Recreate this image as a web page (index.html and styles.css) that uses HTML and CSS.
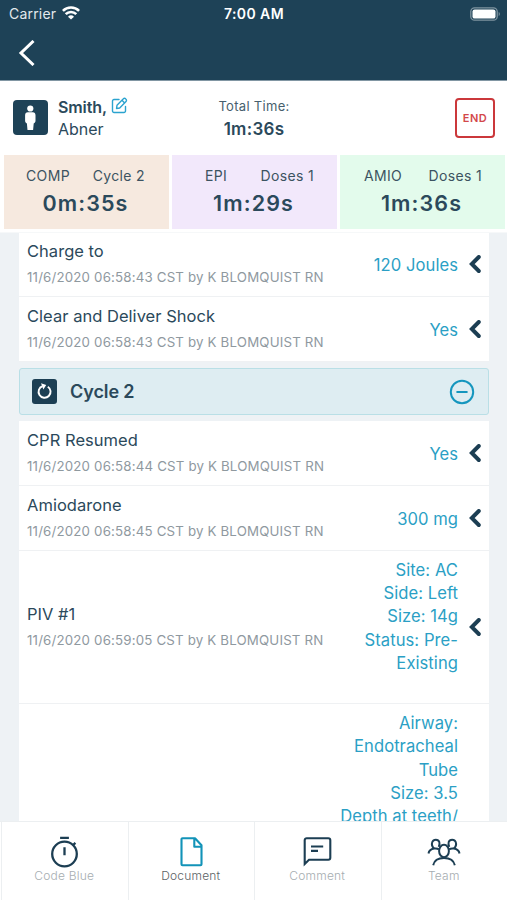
FILE: index.html
```html
<!DOCTYPE html>
<html lang="en">
<head>
<meta charset="utf-8">
<title>Code Blue - Document</title>
<link rel="stylesheet" href="styles.css">
</head>
<body>
<svg class="defs" width="0" height="0" aria-hidden="true">
  <symbol id="chev" viewBox="0 0 12 18"><path d="M9.800 2 2.800 9l7 7" fill="none" stroke="#1c3e53" stroke-width="3.900" stroke-linecap="round" stroke-linejoin="miter"/></symbol>
</svg>
<div class="app">
  <header class="top">
    <div class="status">
      <div class="carrier"><span>Carrier</span>
        <svg width="18" height="14" viewBox="0 0 18 14" fill="none" stroke="#fff" stroke-width="2.600"><path d="M.9 4.900a11.500 11.500 0 0 1 16.200 0M3.700 8.200a7.500 7.500 0 0 1 10.600 0"/><path d="M9 13.600 6 10.800a4.300 4.300 0 0 1 6 0z" fill="#fff" stroke="none"/></svg>
      </div>
      <div class="clock">7:00 AM</div>
      <svg class="battery" width="31" height="14" viewBox="0 0 31 14"><rect x=".8" y=".8" width="26.400" height="12.400" rx="3.800" fill="none" stroke="#7f94a0" stroke-width="1.300"/><rect x="2.500" y="2.400" width="23" height="9.200" rx="2.200" fill="#fff"/><path d="M28.700 5v4c1.500-.6 1.500-3.400 0-4z" fill="#7f94a0"/></svg>
    </div>
    <svg class="back" width="18" height="26" viewBox="0 0 18 26"><path d="M15.500 1 3 13l12.500 12" fill="none" stroke="#fff" stroke-width="3"/></svg>
  </header>

  <section class="patient">
    <svg class="avatar" width="35" height="35" viewBox="0 0 35 35"><rect width="35" height="35" rx="4" fill="#1e4257"/><circle cx="17.300" cy="8.500" r="3.100" fill="#fff"/><path d="M14.800 12.300h5c1.700 0 2.700 1.300 2.700 3v5.500c0 1.600-.9 2.400-1.800 2.600l-.6 6.600h-5.600l-.6-6.600c-.9-.2-1.800-1-1.800-2.600v-5.500c0-1.700 1-3 2.700-3z" fill="#fff"/></svg>
    <div class="name">
      <div class="last">Smith,
        <svg width="17" height="17" viewBox="0 0 17 17" fill="none" stroke="#2ba3cf" stroke-width="1.400" stroke-linejoin="round" stroke-linecap="round"><path d="M8 2.500H3A1.500 1.500 0 0 0 1.500 4v10A1.500 1.500 0 0 0 3 15.500h10a1.500 1.500 0 0 0 1.500-1.500V9.500"/><path d="M5.500 11.500 6 8.300l6.400-6.500a1.500 1.500 0 0 1 2.200 0l.4.400a1.500 1.500 0 0 1 0 2.200L8.700 11zM11 3.300l2.600 2.600"/></svg>
      </div>
      <div class="first">Abner</div>
    </div>
    <div class="total"><div class="total-label">Total Time:</div><div class="total-time">1m:36s</div></div>
    <div class="end">END</div>
  </section>

  <section class="timers">
    <div class="timer comp"><div class="timer-head"><span>COMP</span><span>Cycle 2</span></div><div class="timer-time">0m:35s</div></div>
    <div class="timer epi"><div class="timer-head"><span>EPI</span><span>Doses 1</span></div><div class="timer-time">1m:29s</div></div>
    <div class="timer amio"><div class="timer-head"><span>AMIO</span><span>Doses 1</span></div><div class="timer-time">1m:36s</div></div>
  </section>

  <main class="log">
    <div class="group">
      <div class="row"><div class="entry"><div class="title">Charge to</div><div class="meta">11/6/2020 06:58:43 CST by K BLOMQUIST RN</div></div><div class="value">120 Joules</div><svg class="chev"><use href="#chev"/></svg></div>
      <div class="row"><div class="entry"><div class="title">Clear and Deliver Shock</div><div class="meta">11/6/2020 06:58:43 CST by K BLOMQUIST RN</div></div><div class="value">Yes</div><svg class="chev"><use href="#chev"/></svg></div>
    </div>
    <div class="cycle">
      <svg width="25" height="25" viewBox="0 0 25 25"><rect width="25" height="25" rx="3" fill="#1c3f54"/><path d="M15.800 7.700a6 6 0 1 1-5.200-.6" fill="none" stroke="#fff" stroke-width="1.900"/><path d="M9 4.300 14.200 6l-2.800 4.600z" fill="#fff"/></svg>
      <span>Cycle 2</span>
      <svg width="26" height="26" viewBox="0 0 26 26" fill="none" stroke="#1596be" stroke-width="2"><circle cx="13" cy="13" r="11.200"/><path d="M8.200 13h9.600" stroke-linecap="round"/></svg>
    </div>
    <div class="group">
      <div class="row"><div class="entry"><div class="title">CPR Resumed</div><div class="meta">11/6/2020 06:58:44 CST by K BLOMQUIST RN</div></div><div class="value">Yes</div><svg class="chev"><use href="#chev"/></svg></div>
      <div class="row"><div class="entry"><div class="title">Amiodarone</div><div class="meta">11/6/2020 06:58:45 CST by K BLOMQUIST RN</div></div><div class="value">300 mg</div><svg class="chev"><use href="#chev"/></svg></div>
      <div class="row"><div class="entry"><div class="title">PIV #1</div><div class="meta">11/6/2020 06:59:05 CST by K BLOMQUIST RN</div></div><div class="value">Site: AC<br>Side: Left<br>Size: 14g<br>Status: Pre-<br>Existing<br><br></div><svg class="chev"><use href="#chev"/></svg></div>
      <div class="row"><div class="entry"></div><div class="value">Airway:<br>Endotracheal<br>Tube<br>Size: 3.5<br>Depth at teeth/</div><div class="chev"></div></div>
    </div>
  </main>

  <nav class="tabs">
    <div class="tab"><svg width="34" height="32" viewBox="0 0 34 32" fill="none" stroke="#1c3e53" stroke-width="2.300"><circle cx="17.500" cy="18" r="12.300"/><path d="M13.100 1.800h8.800M17.500 11.200v8M25.800 9.300l2.600-2.400"/></svg><span>Code Blue</span></div>
    <div class="tab active"><svg width="34" height="32" viewBox="0 0 34 32" fill="none" stroke="#1293b8" stroke-width="2.100" stroke-linejoin="round"><path d="M8.500 2.300H21l6.500 7V28.300a1 1 0 0 1-1 1h-18a1 1 0 0 1-1-1v-25a1 1 0 0 1 1-1zM20.300 2.600v8.200h6.500"/></svg><span>Document</span></div>
    <div class="tab"><svg width="34" height="32" viewBox="0 0 34 32" fill="none" stroke="#1c3e53" stroke-width="2.100"><path d="M4.700 28V4.200a2 2 0 0 1 2-2h21.600a2 2 0 0 1 2 2v17.600a2 2 0 0 1-2 2H9z"/><path d="M11 10.500h12.200M11 14.900h7"/></svg><span>Comment</span></div>
    <div class="tab"><svg width="34" height="32" viewBox="0 0 34 32" fill="none" stroke="#1c3e53" stroke-width="2"><ellipse cx="17" cy="15" rx="4.900" ry="6.300"/><path d="M6.200 29.300c1-4.700 5-7.200 10.800-7.200s9.800 2.500 10.800 7.200M1.500 17.500c.5-2.800 2.500-4.300 5.500-4.900 2-.3 3.800 0 5 .8M32.500 17.500c-.5-2.800-2.500-4.300-5.500-4.900-2-.3-3.800 0-5 .8"/><path d="M7 12.500C5 10.500 4.700 7.600 5.300 6 6.400 3 11.300 3 12.300 6c.5 1.600.2 3.400-.6 4.900M27 12.500c2-2 2.300-4.900 1.700-6.500-1.100-3-6-3-7 0-.5 1.600-.2 3.400.6 4.900"/></svg><span>Team</span></div>
  </nav>
</div>
</body>
</html>
```
FILE: styles.css
```css
* { box-sizing: border-box; }
body { margin: 0; font-family: Inter, "Liberation Sans", sans-serif; color: #2b495b; background: #fff; }
svg { display: block; flex: none; }
.defs { position: absolute; }
.app { display: flex; flex-direction: column; width: 507px; height: 900px; overflow: hidden; }

.top { height: 81px; flex: none; background: #1e4257; border-bottom: 1px solid #8196a3; color: #fff; }
.status { display: grid; grid-template-columns: 1fr auto 1fr; align-items: center; height: 27px; padding: 0 6px 0 9px; }
.carrier { display: flex; align-items: center; gap: 6px; font-size: 14px; letter-spacing: .2px; color: #e3e9ed; }
.carrier svg { margin-top: -1px; }
.clock { font-size: 14px; font-weight: 600; letter-spacing: .4px; margin-left: -2px; }
.battery { justify-self: end; }
.back { margin: 13px 0 0 18px; }

.patient { display: grid; grid-template-columns: 35px 1fr 110px 1fr 40px; align-items: center; height: 73px; flex: none; padding: 0 12px 0 13px; }
.name { padding-left: 10px; font-size: 16px; line-height: 22px; }
.last { display: flex; align-items: center; gap: 4px; font-weight: 600; letter-spacing: -.1px; white-space: nowrap; }
.last svg { margin-top: -2px; }
.total { text-align: center; grid-column: 3; padding-left: 5px; }
.total-label { font-size: 13px; line-height: 22px; letter-spacing: .3px; color: #475f6e; }
.total-time { font-size: 17px; line-height: 24px; font-weight: 600; letter-spacing: .3px; }
.end { grid-column: 5; display: flex; align-items: center; justify-content: center; height: 40px; border: 2px solid #cb383b; border-radius: 4px; color: #d3484b; font-size: 11px; font-weight: 600; letter-spacing: .5px; }

.timers { display: grid; grid-template-columns: repeat(3, 1fr); gap: 3px; height: 79px; flex: none; padding: 1px 2px 3px 4px; border-bottom: 1px solid #f6f8f9; }
.timer { padding-top: 11px; }
.comp { background: #f6e9df; }
.epi { background: #f2e8fb; }
.amio { background: #e3fbec; }
.timer-head { display: flex; justify-content: space-between; padding: 0 24px 0 22px; font-size: 14px; line-height: 20px; letter-spacing: .35px; color: #3c5361; white-space: nowrap; }
.epi .timer-head { padding-left: 33px; padding-right: 23px; }
.amio .timer-head { padding-left: 24px; padding-right: 23px; }
.timer-time { margin-top: 4px; padding-right: 2px; font-size: 21.500px; line-height: 27px; font-weight: 600; letter-spacing: 1.100px; text-align: center; }

.log { flex: 1; min-height: 0; overflow: hidden; padding: 0 18px 0 19px; background: #eef2f5; }
.group { background: #fff; }
.group:first-child { margin-top: -1px; }
.row { display: flex; align-items: center; min-height: 65px; padding: 6px 8px 7px 8px; border-bottom: 1px solid #eff1f3; }
.entry { flex: 1; }
.title { font-size: 16.500px; line-height: 22px; letter-spacing: .03px; }
.meta { margin-top: 5px; padding-bottom: 1px; font-size: 13.300px; line-height: 20px; letter-spacing: .17px; color: #8f999f; white-space: nowrap; }
.value { padding-top: 2px; margin-bottom: -2px; font-size: 16.600px; line-height: 23.200px; letter-spacing: .05px; color: #2b9fc5; text-align: right; white-space: nowrap; }
.chev { width: 12px; height: 18px; margin-left: 11px; }
.cycle { display: flex; align-items: center; height: 47px; margin: 6px 0; padding: 0 13px 0 12px; border: 1px solid #b9dfe6; border-radius: 3px; background: #deedf2; }
.cycle span { flex: 1; margin-left: 13px; font-size: 18px; font-weight: 600; letter-spacing: -.1px; }

.tabs { display: grid; grid-template-columns: repeat(4, 1fr); height: 79px; flex: none; padding-left: 1px; background: #fff; border-top: 1px solid #eceff1; }
.tab { display: flex; flex-direction: column; align-items: center; padding: 14px 1px 0 0; border-left: 1px solid #eceff1; font-size: 12px; font-weight: 300; letter-spacing: .2px; line-height: 16px; color: #a6adb1; }
.active { color: #5c6265; }
```
